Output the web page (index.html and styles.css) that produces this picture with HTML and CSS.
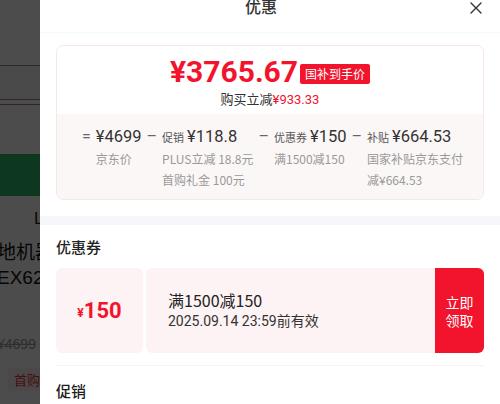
FILE: index.html
```html
<!DOCTYPE html>
<html lang="zh-CN">
<head>
    <meta charset="UTF-8">
    <meta name="viewport" content="width=device-width, initial-scale=1.0">
    <title>优惠</title>
    <link rel="stylesheet" href="styles.css">
</head>
<body>
  <div class="screen">
    <div class="backdrop">
      <div class="bd-top"></div>
      <div class="bd-tabs"></div>
      <div class="bd-rule"></div>
      <div class="bd-buy"></div>
      <div class="bd-spec">L</div>
      <div class="bd-title">地机器人</div>
      <div class="bd-title">EX62</div>
      <div class="bd-price">¥4699</div>
      <div class="bd-tag">首购</div>
    </div>

    <div class="sheet">
      <header class="sheet-head">
        <span class="sheet-title">优惠</span>
        <svg class="close" width="12" height="12" viewBox="0 0 12 12">
          <path d="M1 1 L11 11 M11 1 L1 11" stroke="#333" stroke-width="1.4" fill="none" stroke-linecap="round"/>
        </svg>
      </header>

      <div class="sheet-body">
        <section class="price-card">
          <div class="price-main">
            <div class="price-row">
              <span class="price">¥3765.67</span>
              <span class="price-tag">国补到手价</span>
            </div>
            <div class="price-sub">购买立减<em>¥933.33</em></div>
          </div>
          <div class="calc">
            <span class="op">=</span>
            <div class="calc-item">
              <div class="calc-top"><b>¥4699</b></div>
              <div class="calc-desc">京东价</div>
            </div>
            <span class="op">–</span>
            <div class="calc-item">
              <div class="calc-top"><small>促销</small><b>¥118.8</b></div>
              <div class="calc-desc">PLUS立减 18.8元</div>
              <div class="calc-desc">首购礼金 100元</div>
            </div>
            <span class="op">–</span>
            <div class="calc-item">
              <div class="calc-top"><small>优惠券</small><b>¥150</b></div>
              <div class="calc-desc">满1500减150</div>
            </div>
            <span class="op">–</span>
            <div class="calc-item">
              <div class="calc-top"><small>补贴</small><b>¥664.53</b></div>
              <div class="calc-desc">国家补贴京东支付</div>
              <div class="calc-desc">减¥664.53</div>
            </div>
          </div>
        </section>
      </div>

      <div class="band"></div>

      <div class="sheet-body">
        <h3 class="block-title">优惠券</h3>
        <div class="coupon">
          <div class="coupon-amount"><small>¥</small>150</div>
          <div class="coupon-main">
            <div class="coupon-info">
              <div class="coupon-rule">满1500减150</div>
              <div class="coupon-date">2025.09.14 23:59前有效</div>
            </div>
            <button class="coupon-btn"><span>立即</span><span>领取</span></button>
          </div>
        </div>
        <h3 class="block-title promo">促销</h3>
      </div>
    </div>
  </div>
</body>
</html>
```

FILE: styles.css
```css
* {
    box-sizing: border-box;
}

body {
    margin: 0;
    font-family: "Noto Sans CJK SC", "Noto Sans", sans-serif;
    color: #222;
    background-color: #fff;
}

.screen {
    display: flex;
    width: 500px;
    height: 404px;
    overflow: hidden;
}

/* page behind the sheet, dimmed */
.backdrop {
    position: relative;
    width: 40px;
    flex-shrink: 0;
    overflow: hidden;
    background-color: #fff;
}

.backdrop::after {
    content: "";
    position: absolute;
    inset: 0;
    background-color: rgba(0, 0, 0, 0.7);
}

.bd-top {
    height: 66px;
    border-bottom: 1px solid #b08a8e;
}

.bd-tabs {
    height: 33px;
    background-color: #f7f9fc;
}

.bd-rule {
    height: 6px;
    border-top: 1px solid #a47a7e;
    border-bottom: 1px solid #a47a7e;
}

.bd-buy {
    height: 42px;
    margin-top: 49px;
    background-color: #2fb86a;
}

.bd-spec {
    margin-top: 12px;
    padding-left: 34px;
    font-family: "Liberation Sans", sans-serif;
    font-size: 17px;
    line-height: 22px;
}

.bd-title {
    margin-left: -3px;
    white-space: nowrap;
    font-family: "Liberation Sans", "Noto Sans CJK SC", sans-serif;
    font-size: 19px;
    line-height: 25px;
    color: #111;
}

.bd-spec + .bd-title {
    margin-top: 10px;
}

.bd-price {
    margin-top: 46px;
    margin-left: -3px;
    font-family: "Liberation Sans", sans-serif;
    font-size: 14px;
    color: #999;
    text-decoration: line-through;
}

.bd-tag {
    width: 40px;
    margin: 16px 0 0 8px;
    padding: 2px 6px;
    background-color: #fdeff0;
    color: #e4393c;
    font-size: 13px;
    white-space: nowrap;
}

/* sheet */
.sheet {
    flex: 1;
    background-color: #fff;
}

.sheet-head {
    display: grid;
    grid-template-columns: 1fr auto 1fr;
    height: 33px;
    padding-right: 18px;
    border-bottom: 1px solid #f8f8f8;
}

.sheet-title {
    grid-column: 2;
    font-size: 16px;
    line-height: 12px;
    font-weight: 500;
    color: #333;
}

.close {
    justify-self: end;
    margin-top: 2px;
}

.sheet-body {
    padding: 0 16px;
}

.price-card {
    margin-top: 12px;
    border: 1px solid #f7e6e8;
    border-radius: 7px;
    overflow: hidden;
}

.price-main {
    padding: 8px 0 5px;
    text-align: center;
}

.price-row {
    display: flex;
    justify-content: center;
    align-items: center;
    gap: 2px;
}

.price {
    font-family: Roboto, sans-serif;
    font-size: 30px;
    line-height: 36px;
    font-weight: 700;
    color: #f2142c;
}

.price-tag {
    margin-top: 4px;
    padding: 0 5px;
    background-color: #f2142c;
    color: #fff;
    font-size: 12px;
    line-height: 20px;
    border-radius: 2px;
}

.price-sub {
    font-size: 13px;
    line-height: 18px;
    color: #333;
}

.price-sub em {
    font-style: normal;
    font-family: Roboto, sans-serif;
    color: #f2142c;
}

.calc {
    display: flex;
    justify-content: center;
    align-items: flex-start;
    padding: 12px 0 9px;
    background-color: #fcf7f7;
}

.op {
    padding: 0 5px;
    font-family: Roboto, sans-serif;
    font-size: 16px;
    line-height: 22px;
    color: #666;
}

.calc-top {
    display: flex;
    align-items: baseline;
    gap: 3px;
    line-height: 22px;
}

.calc-top small {
    font-size: 11px;
    color: #555;
}

.calc-top b {
    font-family: Roboto, sans-serif;
    font-size: 16.5px;
    font-weight: 400;
    color: #333;
}

.calc-desc {
    font-size: 12px;
    line-height: 21px;
    color: #999;
}

.band {
    height: 9px;
    margin-top: 16px;
    background-color: #f6f7fa;
}

.block-title {
    margin: 0;
    padding-top: 11px;
    font-size: 15px;
    line-height: 22px;
    font-weight: 500;
    color: #222;
}

.coupon {
    display: flex;
    gap: 3px;
    margin-top: 10px;
    padding-bottom: 12px;
    border-bottom: 1px solid #f3f3f3;
}

.coupon-amount {
    display: flex;
    align-items: center;
    justify-content: center;
    width: 87px;
    height: 85px;
    background-color: #fdf2f4;
    border-radius: 6px;
    font-family: Roboto, sans-serif;
    font-size: 22px;
    font-weight: 700;
    color: #f2142c;
}

.coupon-amount small {
    margin-top: 5px;
    font-size: 12px;
}

.coupon-main {
    display: flex;
    flex: 1;
    background-color: #fdf2f4;
    border-radius: 6px;
    overflow: hidden;
}

.coupon-info {
    display: flex;
    flex: 1;
    flex-direction: column;
    justify-content: center;
    padding-left: 22px;
}

.coupon-rule {
    font-size: 16px;
    line-height: 22px;
    color: #222;
}

.coupon-date {
    font-family: Roboto, "Noto Sans CJK SC", sans-serif;
    font-size: 14px;
    line-height: 21px;
    color: #333;
}

.coupon-btn {
    display: flex;
    flex-direction: column;
    align-items: center;
    justify-content: center;
    width: 49px;
    padding: 0;
    border: none;
    background-color: #f2142c;
    color: #fff;
    font-family: "Noto Sans CJK SC", sans-serif;
    font-size: 14px;
    line-height: 18px;
}

.promo {
    padding-top: 14px;
}
```
